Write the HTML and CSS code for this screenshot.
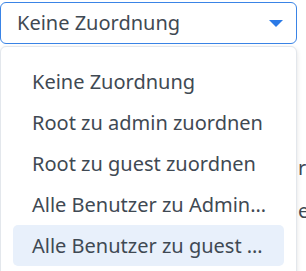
FILE: index.html
```html
<!DOCTYPE html>
<html lang="de">
<head>
<meta charset="utf-8">
<link rel="stylesheet" href="styles.css">
</head>
<body>
<div class="page">
  <div class="select">
    <span class="select-value">Keine Zuordnung</span>
    <svg class="caret" width="14" height="7" viewBox="0 0 14 7"><path d="M0 0 H14 L7 7 Z" fill="#2b7ae6"/></svg>
  </div>
  <div class="behind">
    <div class="behind-line l1">r</div>
    <div class="behind-line l2">e</div>
  </div>
  <ul class="menu">
    <li class="item">Keine Zuordnung</li>
    <li class="item">Root zu admin zuordnen</li>
    <li class="item">Root zu guest zuordnen</li>
    <li class="item">Alle Benutzer zu Admin…</li>
    <li class="item active">Alle Benutzer zu guest …</li>
  </ul>
</div>
</body>
</html>
```
FILE: styles.css
```css
html, body {
  margin: 0;
  padding: 0;
  background: #ffffff;
}
body {
  font-family: "Noto Sans", "Open Sans", sans-serif;
  font-size: 20px;
  color: #3f4953;
  width: 306px;
  height: 271px;
  overflow: hidden;
}
.page {
  position: relative;
  padding-top: 2px;
}
.select {
  box-sizing: border-box;
  width: 297px;
  height: 42px;
  border: 1px solid #3a84e6;
  border-radius: 6px;
  display: flex;
  align-items: center;
  justify-content: space-between;
  padding: 0 13px 0 16px;
}
.select-value {
  line-height: 1;
}
.caret {
  display: block;
  margin-top: 1px;
}
.behind {
  padding-top: 112px;
  padding-left: 298px;
}
.behind-line {
  height: 43px;
  line-height: 24px;
}
.menu {
  position: absolute;
  left: 0;
  top: 46px;
  box-sizing: border-box;
  width: 297px;
  height: 260px;
  margin: 0;
  padding: 14px 12px;
  list-style: none;
  background: #ffffff;
  border: 1px solid #e3e7ec;
  border-radius: 6px;
  box-shadow: 0 2px 5px rgba(0, 0, 0, 0.12);
}
.item {
  height: 41px;
  display: flex;
  align-items: center;
  padding-left: 19px;
  border-radius: 5px;
  white-space: nowrap;
}
.item.active {
  background: #e8f0fb;
}
```
